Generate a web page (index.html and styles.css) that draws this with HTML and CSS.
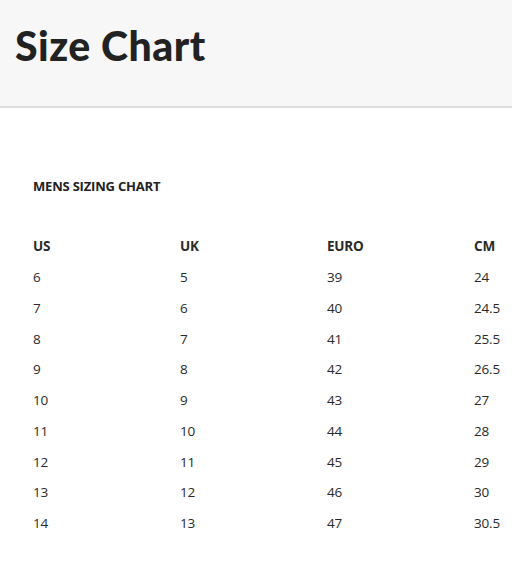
FILE: index.html
```html
<!DOCTYPE html>
<html>
<head>
<meta charset="utf-8">
<link rel="stylesheet" href="styles.css">
</head>
<body>
<header class="page-header">
  <h1 class="page-title">Size Chart</h1>
</header>
<main class="content">
  <h2 class="chart-title">MENS SIZING CHART</h2>
  <div class="size-table">
    <div class="cell head">US</div><div class="cell head">UK</div><div class="cell head">EURO</div><div class="cell head">CM</div>
    <div class="cell">6</div><div class="cell">5</div><div class="cell">39</div><div class="cell">24</div>
    <div class="cell">7</div><div class="cell">6</div><div class="cell">40</div><div class="cell">24.5</div>
    <div class="cell">8</div><div class="cell">7</div><div class="cell">41</div><div class="cell">25.5</div>
    <div class="cell">9</div><div class="cell">8</div><div class="cell">42</div><div class="cell">26.5</div>
    <div class="cell">10</div><div class="cell">9</div><div class="cell">43</div><div class="cell">27</div>
    <div class="cell">11</div><div class="cell">10</div><div class="cell">44</div><div class="cell">28</div>
    <div class="cell">12</div><div class="cell">11</div><div class="cell">45</div><div class="cell">29</div>
    <div class="cell">13</div><div class="cell">12</div><div class="cell">46</div><div class="cell">30</div>
    <div class="cell">14</div><div class="cell">13</div><div class="cell">47</div><div class="cell">30.5</div>
  </div>
</main>
</body>
</html>
```
FILE: styles.css
```css
html, body {
  margin: 0;
  padding: 0;
  background: #ffffff;
}
.page-header {
  background: #f7f7f7;
  height: 106px;
  border-bottom: 2px solid #dcdcdc;
  padding: 0 15px;
  display: flex;
  align-items: flex-start;
}
.page-title {
  margin: 0;
  padding-top: 20px;
  font-family: Lato, "Noto Sans", sans-serif;
  font-weight: 900;
  font-size: 41px;
  line-height: 52px;
  color: #222222;
  letter-spacing: 0.5px;
}
.content {
  padding: 68px 12px 0 33px;
  font-family: "Open Sans", "Noto Sans", sans-serif;
  color: #222222;
}
.chart-title {
  margin: 0;
  font-size: 13px;
  font-weight: 700;
  line-height: 20px;
  letter-spacing: -0.2px;
}
.size-table {
  margin-top: 35px;
  display: grid;
  grid-template-columns: 147px 147px 147px 1fr;
  grid-auto-rows: 30.75px;
  font-size: 13.5px;
  color: #2a2a2a;
}
.cell {
  display: flex;
  align-items: center;
  letter-spacing: -0.2px;
}
.cell.head {
  font-weight: 700;
}
```
